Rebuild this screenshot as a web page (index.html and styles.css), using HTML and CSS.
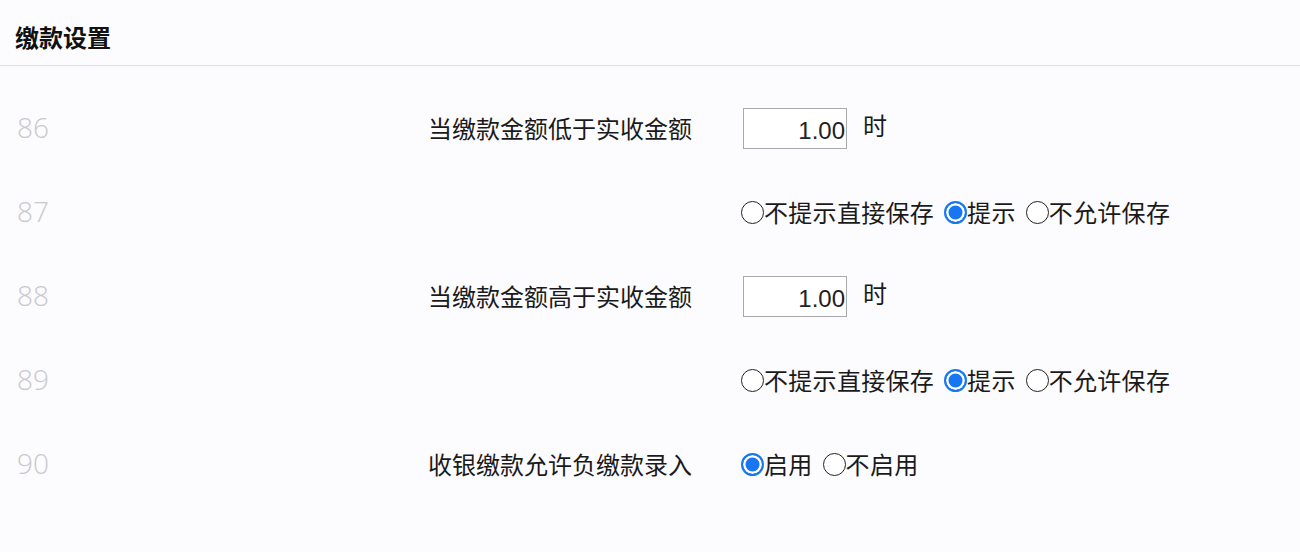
FILE: index.html
```html
<!DOCTYPE html>
<html>
    <head>
        <title>缴款设置</title>
        <meta charset="utf-8" />
        <link rel="stylesheet" href="styles.css">
    </head>
    <body>
        <div class="panel-title">缴款设置</div>
        <div class="settings">
            <div class="row">
                <span class="num">86</span>
                <span class="label">当缴款金额低于实收金额</span>
                <div class="control">
                    <input class="amount" type="text" value="1.00" />
                    <span class="unit">时</span>
                </div>
            </div>
            <div class="row">
                <span class="num">87</span>
                <span class="label"></span>
                <div class="control">
                    <label class="opt"><input type="radio" name="low" />不提示直接保存</label>
                    <label class="opt"><input type="radio" name="low" checked />提示</label>
                    <label class="opt"><input type="radio" name="low" />不允许保存</label>
                </div>
            </div>
            <div class="row">
                <span class="num">88</span>
                <span class="label">当缴款金额高于实收金额</span>
                <div class="control">
                    <input class="amount" type="text" value="1.00" />
                    <span class="unit">时</span>
                </div>
            </div>
            <div class="row">
                <span class="num">89</span>
                <span class="label"></span>
                <div class="control">
                    <label class="opt"><input type="radio" name="high" />不提示直接保存</label>
                    <label class="opt"><input type="radio" name="high" checked />提示</label>
                    <label class="opt"><input type="radio" name="high" />不允许保存</label>
                </div>
            </div>
            <div class="row">
                <span class="num">90</span>
                <span class="label">收银缴款允许负缴款录入</span>
                <div class="control">
                    <label class="opt"><input type="radio" name="neg" checked />启用</label>
                    <label class="opt"><input type="radio" name="neg" />不启用</label>
                </div>
            </div>
        </div>
    </body>
</html>
```

FILE: styles.css
```css
html,
body {
    margin: 0;
    padding: 0;
    background: #fcfbfd;
    font-family: "Noto Sans CJK SC", "Noto Sans", sans-serif;
    color: #1a1a1a;
}

.panel-title {
    height: 65px;
    line-height: 74px;
    padding-left: 15px;
    font-size: 24px;
    font-weight: bold;
    color: #111;
    border-bottom: 1px solid #dedde0;
}

.settings {
    padding-top: 20px;
}

.row {
    display: grid;
    grid-template-columns: 211px 415px 1fr;
    column-gap: 49px;
    align-items: center;
    height: 84px;
    padding-left: 17px;
}

.num {
    margin-top: -3px;
    font-family: "Open Sans", sans-serif;
    font-size: 28px;
    font-weight: 300;
    color: #c9c9cb;
}

.label {
    text-align: right;
    font-size: 24px;
    line-height: 30px;
}

.control {
    display: flex;
    align-items: center;
    font-size: 24px;
    line-height: 30px;
}

.amount {
    width: 104px;
    height: 41px;
    box-sizing: border-box;
    margin: 0 0 0 2px;
    padding: 6px 1px 0 0;
    border: 1px solid #a9a9ab;
    background: #fff;
    text-align: right;
    font-family: "Liberation Sans", sans-serif;
    font-size: 24px;
    color: #222;
    outline: none;
}

.unit {
    margin-left: 16px;
    margin-top: -6px;
}

.opt {
    display: flex;
    align-items: center;
    margin-right: 10px;
    letter-spacing: 0.3px;
}

.opt input {
    appearance: none;
    -webkit-appearance: none;
    width: 23px;
    height: 23px;
    margin: 0;
    border: 1.5px solid #222;
    border-radius: 50%;
    background: #fff;
    box-sizing: border-box;
}

.opt input:checked {
    border: 2px solid #1677f0;
    background: #1677f0;
    box-shadow: inset 0 0 0 2.5px #fff;
}
```
